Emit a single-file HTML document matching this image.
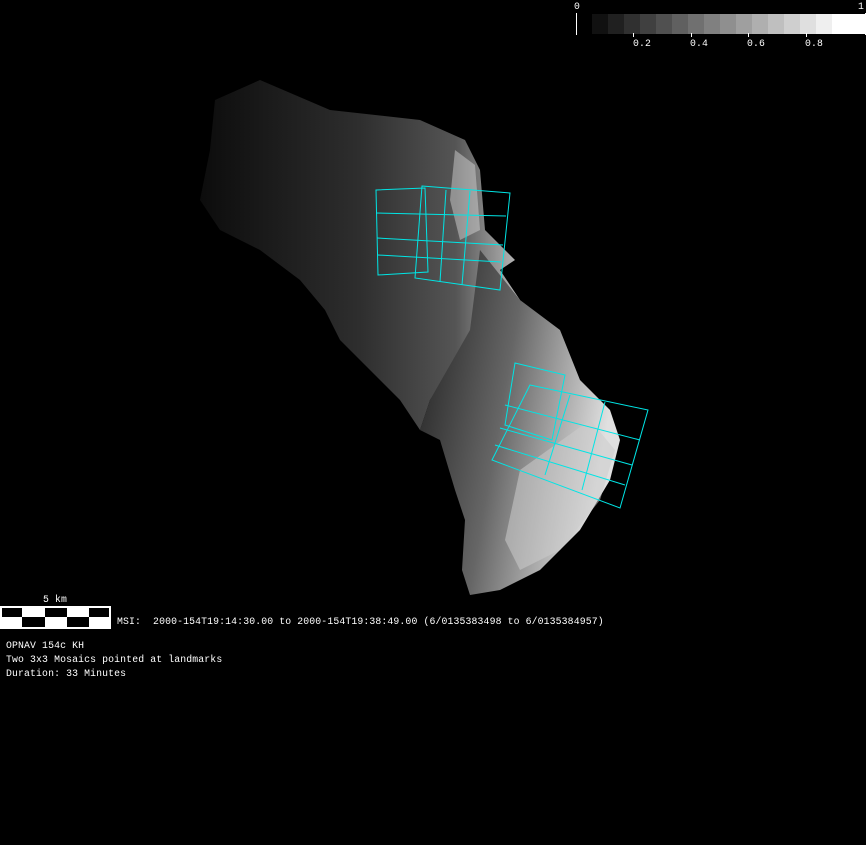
<!DOCTYPE html>
<html><head><meta charset="utf-8"><style>
html,body{margin:0;padding:0;background:#000;width:866px;height:845px;overflow:hidden}
.t{position:absolute;color:#fff;font-family:"Liberation Mono",monospace;font-size:9.8px;letter-spacing:0.13px;line-height:14px;white-space:pre}
</style></head><body>
<svg width="866" height="845" style="position:absolute;left:0;top:0">
<defs>
<linearGradient id="g1" x1="0" y1="0" x2="1" y2="0">
<stop offset="0" stop-color="#0c0c0c"/><stop offset="0.5" stop-color="#2e2e2e"/><stop offset="0.8" stop-color="#555"/><stop offset="1" stop-color="#bbb"/>
</linearGradient>
<linearGradient id="g2" x1="0" y1="0" x2="1" y2="0.3">
<stop offset="0" stop-color="#1e1e1e"/><stop offset="0.5" stop-color="#666"/><stop offset="1" stop-color="#e0e0e0"/>
</linearGradient>
</defs>
<polygon fill="url(#g1)" points="215,100 260,80 330,110 420,120 465,140 480,170 485,230 515,260 500,270 520,300 480,330 430,400 420,430 400,400 370,370 340,340 325,310 300,280 260,250 220,230 200,200 210,150"/>
<polygon fill="url(#g2)" points="480,250 520,300 560,330 580,380 610,410 620,440 610,480 580,530 540,570 500,590 470,595 462,570 465,520 455,490 440,440 420,430 430,400 470,330"/>
<polygon fill="#ccc" opacity="0.55" points="520,470 590,420 615,450 600,500 560,550 520,570 505,540"/>
<polygon fill="#ddd" opacity="0.45" points="455,150 475,165 480,230 460,240 450,200"/>
<g fill="none" stroke="#00e5e5" stroke-width="1">
<polygon points="376,190 425,188 428,272 378,275"/>
<polygon points="422,186 510,193 500,290 415,278"/>
<line x1="376" y1="213" x2="506" y2="216"/><line x1="377" y1="238" x2="503" y2="245"/><line x1="378" y1="255" x2="501" y2="262"/>
<line x1="446" y1="190" x2="440" y2="282"/><line x1="470" y1="191" x2="462" y2="285"/>
<polygon points="515,363 565,375 552,440 505,425"/>
<polygon points="530,385 648,410 620,508 492,460"/>
<line x1="505" y1="405" x2="640" y2="440"/><line x1="500" y1="428" x2="632" y2="465"/><line x1="495" y1="445" x2="625" y2="485"/>
<line x1="570" y1="395" x2="545" y2="475"/><line x1="605" y1="402" x2="582" y2="490"/>
</g>
<line x1="576.5" y1="13" x2="576.5" y2="35" stroke="#fff"/>
<line x1="865.5" y1="13" x2="865.5" y2="35" stroke="#fff"/>
<g>
<rect x="592" y="14" width="16" height="20" fill="#111"/><rect x="608" y="14" width="16" height="20" fill="#202020"/><rect x="624" y="14" width="16" height="20" fill="#303030"/><rect x="640" y="14" width="16" height="20" fill="#404040"/><rect x="656" y="14" width="16" height="20" fill="#505050"/><rect x="672" y="14" width="16" height="20" fill="#606060"/><rect x="688" y="14" width="16" height="20" fill="#707070"/><rect x="704" y="14" width="16" height="20" fill="#808080"/><rect x="720" y="14" width="16" height="20" fill="#8f8f8f"/><rect x="736" y="14" width="16" height="20" fill="#9f9f9f"/><rect x="752" y="14" width="16" height="20" fill="#afafaf"/><rect x="768" y="14" width="16" height="20" fill="#bfbfbf"/><rect x="784" y="14" width="16" height="20" fill="#cfcfcf"/><rect x="800" y="14" width="16" height="20" fill="#dfdfdf"/><rect x="816" y="14" width="16" height="20" fill="#efefef"/><rect x="832" y="14" width="33" height="20" fill="#fff"/>
</g>
<g stroke="#fff"><line x1="633.5" y1="33" x2="633.5" y2="37"/><line x1="691.5" y1="33" x2="691.5" y2="37"/><line x1="748.5" y1="33" x2="748.5" y2="37"/><line x1="806.5" y1="33" x2="806.5" y2="37"/></g>
<rect x="0" y="606" width="111" height="23" fill="#fff"/>
<rect x="2" y="608" width="20" height="9" fill="#000"/><rect x="45" y="608" width="22" height="9" fill="#000"/><rect x="89" y="608" width="20" height="9" fill="#000"/>
<rect x="22" y="617" width="23" height="10" fill="#000"/><rect x="67" y="617" width="22" height="10" fill="#000"/>
</svg>
<div class="t" style="left:574px;top:0px">0</div>
<div class="t" style="left:858px;top:0px">1</div>
<div class="t" style="left:633px;top:37px">0.2</div>
<div class="t" style="left:690px;top:37px">0.4</div>
<div class="t" style="left:747px;top:37px">0.6</div>
<div class="t" style="left:805px;top:37px">0.8</div>
<div class="t" style="left:43px;top:593px">5 km</div>
<div class="t" style="left:117px;top:615px">MSI:  2000-154T19:14:30.00 to 2000-154T19:38:49.00 (6/0135383498 to 6/0135384957)</div>
<div class="t" style="left:6px;top:639px">OPNAV 154c KH
Two 3x3 Mosaics pointed at landmarks
Duration: 33 Minutes</div>
</body></html>
